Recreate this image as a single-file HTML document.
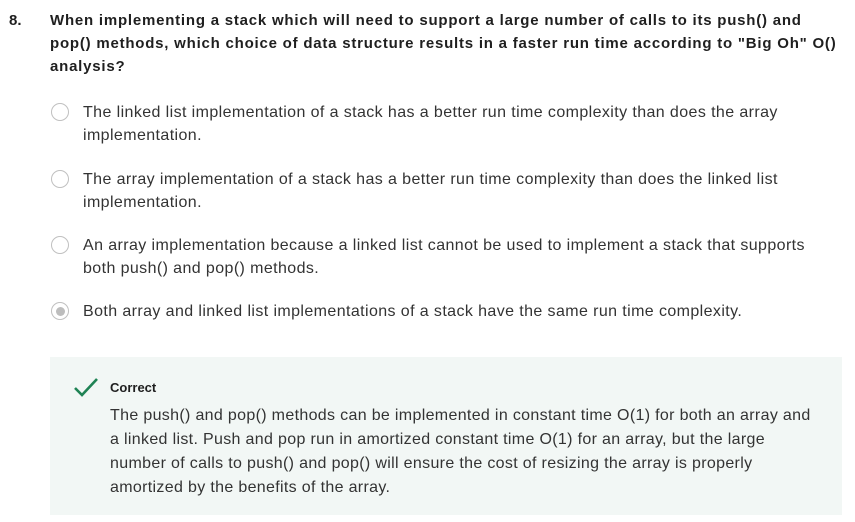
<!DOCTYPE html>
<html><head><style>
body{margin:0;width:855px;height:522px;background:#fff;font-family:"Liberation Sans",sans-serif;color:#1f1f1f;position:relative;overflow:hidden}
.q{position:absolute;left:50px;top:9px;white-space:nowrap;font-weight:bold;font-size:15px;letter-spacing:0.78px;line-height:23px;color:#1f1f1f}
.num{position:absolute;left:9px;top:9px;font-weight:bold;font-size:15px;line-height:23px}
.opt{position:absolute;left:83px;white-space:nowrap;font-size:16px;letter-spacing:0.4px;line-height:23px;color:#333}
.r{position:absolute;left:51px;width:16px;height:16px;border:1.5px solid #c0c0c0;border-radius:50%;background:#fff}
.box{position:absolute;left:50px;top:357px;width:792px;height:158px;background:#f2f7f5}
.c{position:absolute;left:110px;top:380px;font-weight:bold;font-size:13px;color:#1f1f1f}
.ex{position:absolute;left:110px;top:404px;white-space:nowrap;font-size:16px;letter-spacing:0.33px;line-height:24px;color:#333}
</style></head><body>
<div class="num">8.</div>
<div class="q">When implementing a stack which will need to support a large number of calls to its push() and<br>pop() methods, which choice of data structure results in a faster run time according to "Big Oh" O()<br>analysis?</div>
<div class="r" style="top:103px"></div>
<div class="opt" style="top:101px">The linked list implementation of a stack has a better run time complexity than does the array<br>implementation.</div>
<div class="r" style="top:170px"></div>
<div class="opt" style="top:168px">The array implementation of a stack has a better run time complexity than does the linked list<br>implementation.</div>
<div class="r" style="top:236px"></div>
<div class="opt" style="top:234px">An array implementation because a linked list cannot be used to implement a stack that supports<br>both push() and pop() methods.</div>
<div class="r" style="top:302px"><div style="position:absolute;left:3.5px;top:3.5px;width:9px;height:9px;border-radius:50%;background:#bdbdbd"></div></div>
<div class="opt" style="top:300px">Both array and linked list implementations of a stack have the same run time complexity.</div>
<div class="box"></div>
<svg style="position:absolute;left:73px;top:376px" width="26" height="22" viewBox="0 0 26 22"><path d="M2 12 L9 19 L24 3" fill="none" stroke="#1f8354" stroke-width="2.6"/></svg>
<div class="c">Correct</div>
<div class="ex">The push() and pop() methods can be implemented in constant time O(1) for both an array and<br>a linked list. Push and pop run in amortized constant time O(1) for an array, but the large<br>number of calls to push() and pop() will ensure the cost of resizing the array is properly<br>amortized by the benefits of the array.</div>
</body></html>
